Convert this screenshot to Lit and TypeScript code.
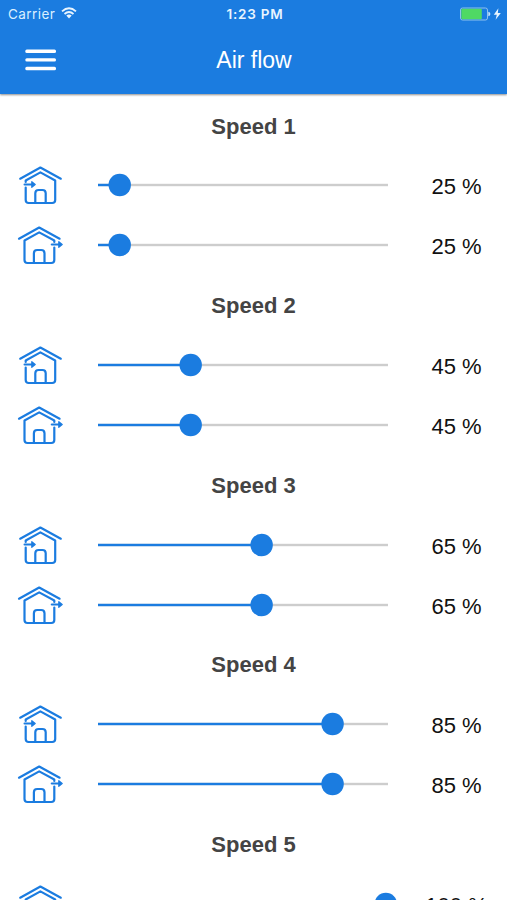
import { LitElement, html, svg, css } from "lit";
import { customElement, property } from "lit/decorators.js";

const MIN = 20;
const MAX = 100;

@customElement("house-icon")
class HouseIcon extends LitElement {
  @property() direction: "in" | "out" = "in";

  static styles = css`
    :host { display: block; width: 50px; height: 59.88px; }
    svg { display: block; overflow: visible; }
    .line { fill: none; stroke: #1b7ce0; stroke-width: 2.2; stroke-linecap: round; stroke-linejoin: round; }
    .head { fill: #1b7ce0; stroke: #1b7ce0; stroke-width: 1.2; stroke-linejoin: round; }
  `;

  render() {
    const intake = svg`
      <path class="line" d="M5.2 23.7 25.4 12.5 45.8 23.7"/>
      <path class="line" d="M10.7 27V25.5L25.4 17.4 40.2 25.5V45Q40.2 48 37.2 48H13.7Q10.7 48 10.7 45V32.5"/>
      <path class="line" d="M20.3 48V38.3Q20.3 35 23.6 35H27.4Q30.7 35 30.7 38.3V48"/>
      <path class="line" d="M9.6 29.5H18"/>
      <path class="head" d="M16.8 26.7 20.2 29.5 16.8 32.3Z"/>`;
    const exhaust = svg`
      <path class="line" d="M4 23.7 24.2 12.5 44.6 23.7"/>
      <path class="line" d="M39.3 27V25.5L24.2 17.4 9.5 25.5V45Q9.5 48 12.5 48H36.3Q39.3 48 39.3 45V32.5"/>
      <path class="line" d="M18.9 48V38.3Q18.9 35 22.2 35H26.2Q29.5 35 29.5 38.3V48"/>
      <path class="line" d="M36.8 29.5H45"/>
      <path class="head" d="M43.8 26.7 47.2 29.5 43.8 32.3Z"/>`;
    return html`<svg width="50" height="59.88" viewBox="0 0 50 59.88">
      ${this.direction === "in" ? intake : exhaust}
    </svg>`;
  }
}

@customElement("flow-row")
class FlowRow extends LitElement {
  @property() direction: "in" | "out" = "in";
  @property({ type: Number }) value = 0;

  static styles = css`
    :host {
      display: grid;
      grid-template-columns: 50px 290px 1fr;
      column-gap: 33px;
      align-items: center;
      height: 59.88px;
      padding-left: 15px;
    }
    .slider { display: block; overflow: visible; }
    .track { fill: #cdcdcd; }
    .active { fill: #1b7ce0; }
    .value { font-size: 22px; line-height: 26px; color: #111; text-align: center; padding: 4px 15px 0 0; white-space: nowrap; }
  `;

  render() {
    const x = 4 + ((this.value - MIN) / (MAX - MIN)) * 283.8;
    return html`
      <house-icon direction=${this.direction}></house-icon>
      <svg class="slider" width="290" height="24" viewBox="0 0 290 24">
        <rect class="track" y="10.8" width="290" height="2.4"/>
        <rect class="active" y="10.8" width=${x} height="2.4"/>
        <circle class="active" cx=${x} cy="12" r="11.2"/>
      </svg>
      <div class="value">${this.value} %</div>
    `;
  }
}

@customElement("app-root")
class AppRoot extends LitElement {
  static styles = css`
    :host {
      display: block;
      height: 900px;
      overflow: hidden;
      background: #fff;
      font-family: "Liberation Sans", Arial, sans-serif;
    }
    .header { height: 94px; background: #1b7ce0; color: #fff; box-shadow: 0 1px 2px rgba(0, 0, 0, 0.45); }
    .status { display: grid; grid-template-columns: 1fr auto 1fr; align-items: center; height: 27px; padding: 0 5px 0 8px; font-family: Inter, sans-serif; font-size: 13.5px; }
    .carrier { display: flex; align-items: center; gap: 6px; letter-spacing: 0.45px; color: #d9efff; }
    .wifi { margin-top: -2px; }
    .time { font-weight: 600; font-size: 13.5px; letter-spacing: 0.8px; color: #e9f5ff; }
    .power { display: flex; justify-content: flex-end; }
    .bar { display: grid; grid-template-columns: 1fr auto 1fr; align-items: center; height: 66px; padding: 0 24px 0 25px; box-sizing: border-box; }
    .menu { display: block; fill: #fff; }
    .title { font-size: 23px; line-height: 28px; }
    .list { padding-top: 1.6px; }
    .speed { height: 59.88px; padding-top: 2px; box-sizing: border-box; display: flex; align-items: center; justify-content: center; font-size: 22px; font-weight: 700; color: #444; }
  `;

  render() {
    return html`
      <header class="header">
        <div class="status">
          <div class="carrier">
            <span>Carrier</span>
            <svg class="wifi" width="16" height="12" viewBox="0 0 16 12" fill="none" stroke="#e9f5ff" stroke-width="1.8">
              <path d="M1 4.3Q8-1.9 15 4.3M3.5 7Q8 3.1 12.5 7"/>
              <path d="M5.3 8.6Q8 6.6 10.7 8.6L8 11.4Z" fill="#e9f5ff" stroke="none"/>
            </svg>
          </div>
          <div class="time">1:23 PM</div>
          <div class="power">
            <svg width="43" height="14" viewBox="0 0 43 14">
              <rect x="1.5" y="1" width="27" height="12" rx="2" fill="none" stroke="#8fc1ee"/>
              <rect x="2.3" y="1.8" width="20.5" height="10.4" rx="1" fill="#4fd964"/>
              <path d="M29.3 4.8Q31.4 5.2 31.4 7T29.3 9.2Z" fill="#c5e2fa"/>
              <path d="M39.4 1.3 34.8 7.8H37.8L36.6 12.7 41.8 6H38.8Z" fill="#e9f5ff"/>
            </svg>
          </div>
        </div>
        <div class="bar">
          <svg class="menu" width="31" height="22" viewBox="0 0 31 22">
            <rect x="0.3" y="0.6" width="30.7" height="3.4" rx="1.5"/>
            <rect x="0.3" y="9.2" width="30.7" height="3.4" rx="1.5"/>
            <rect x="0.3" y="17.8" width="30.7" height="3.4" rx="1.5"/>
          </svg>
          <div class="title">Air flow</div>
        </div>
      </header>
      <main class="list">
        ${[25, 45, 65, 85, 100].map(
          (v, i) => html`
            <section>
              <div class="speed">Speed ${i + 1}</div>
              <flow-row direction="in" .value=${v}></flow-row>
              <flow-row direction="out" .value=${v}></flow-row>
            </section>
          `
        )}
      </main>
    `;
  }
}
